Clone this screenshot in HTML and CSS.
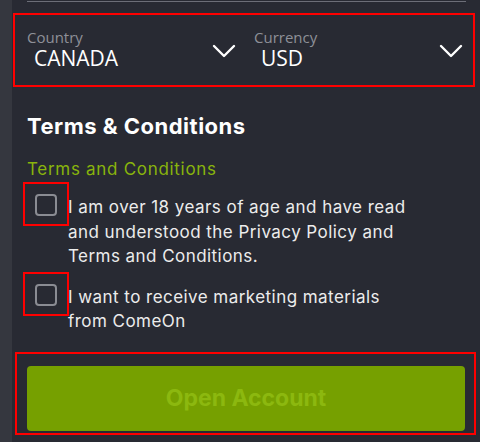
FILE: index.html
```html
<!DOCTYPE html>
<html lang="en">
<head>
<meta charset="utf-8">
<title>Open Account</title>
<link rel="stylesheet" href="styles.css">
</head>
<body>
<div class="page">
  <div class="rail"></div>
  <main class="form">
    <div class="prev-field"></div>

    <div class="selects highlight">
      <div class="field">
        <div class="field-text">
          <div class="field-label">Country</div>
          <div class="field-value">CANADA</div>
        </div>
        <svg class="chevron" width="24" height="15" viewBox="0 0 24 15" aria-hidden="true"><path d="M2 2 L12 12 L22 2" fill="none" stroke="#ffffff" stroke-width="2.4" stroke-linecap="round" stroke-linejoin="round"/></svg>
      </div>
      <div class="field">
        <div class="field-text">
          <div class="field-label">Currency</div>
          <div class="field-value">USD</div>
        </div>
        <svg class="chevron" width="24" height="15" viewBox="0 0 24 15" aria-hidden="true"><path d="M2 2 L12 12 L22 2" fill="none" stroke="#ffffff" stroke-width="2.4" stroke-linecap="round" stroke-linejoin="round"/></svg>
      </div>
    </div>

    <h2 class="section-title">Terms &amp; Conditions</h2>
    <div class="terms-link">Terms and Conditions</div>

    <label class="check-row first">
      <span class="check-hit"><span class="checkbox"></span></span>
      <span class="check-text">I am over 18 years of age and have read and understood the Privacy Policy and Terms and Conditions.</span>
    </label>
    <label class="check-row second">
      <span class="check-hit"><span class="checkbox"></span></span>
      <span class="check-text">I want to receive marketing materials from ComeOn</span>
    </label>

    <div class="submit-wrap">
      <button class="submit" type="button">Open Account</button>
    </div>
  </main>
</div>
</body>
</html>
```

FILE: styles.css
```css
html, body {
  margin: 0;
  padding: 0;
  background: #282a33;
  height: 442px;
  overflow: hidden;
}

.page {
  display: flex;
  width: 480px;
  height: 442px;
}

.rail {
  width: 12px;
  flex: none;
  background: #35373f;
}

.form {
  flex: 1;
  background: #282a33;
  padding: 0 14px 0 15px;
  font-family: Inter, "Noto Sans", sans-serif;
  color: #ececec;
}

.prev-field {
  height: 1px;
  border-bottom: 1px solid #6c6e78;
}

.highlight {
  border: 2px solid #ff0000;
}

.selects {
  margin: 11px -9px 0 -14px;
  padding: 13px 7px 15px 12px;
  display: grid;
  grid-template-columns: 1fr 1fr;
  column-gap: 15px;
  font-family: "Open Sans", sans-serif;
}

.field {
  display: flex;
  align-items: center;
}

.field-text {
  flex: 1;
}

.field-label {
  font-size: 15px;
  line-height: 18px;
  color: #8e9098;
}

.field-value {
  font-size: 21px;
  line-height: 24px;
  color: #ffffff;
  padding-left: 7px;
}

.chevron {
  flex: none;
  margin-right: 3px;
  margin-top: 5px;
}

.section-title {
  margin: 26px 0 0;
  font-size: 22px;
  line-height: 26px;
  font-weight: 700;
  letter-spacing: 0.5px;
  color: #ffffff;
}

.terms-link {
  margin-top: 18px;
  font-size: 17px;
  line-height: 24px;
  letter-spacing: 0.7px;
  color: #88b40c;
}

.check-row {
  display: flex;
  align-items: flex-start;
  font-size: 17px;
  line-height: 24.5px;
  letter-spacing: 0.45px;
  color: #ececec;
}

.check-row.first {
  margin-top: 13px;
}

.check-row.second {
  margin-top: 15px;
}

.check-hit {
  flex: none;
  display: block;
  margin: -12px 0 0 -4px;
  padding: 10px 10px 8px 10px;
  border: 2px solid #ff0000;
}

.checkbox {
  display: block;
  width: 22px;
  height: 22px;
  box-sizing: border-box;
  border: 2px solid #8a8c93;
  border-radius: 4px;
}

.check-text {
  margin-left: -1px;
  padding-top: 1px;
  width: 352px;
}

.submit-wrap {
  margin: 18px -10px 0 -12px;
  padding: 12px 9px 2px 10px;
  border: 2px solid #ff0000;
}

.submit {
  display: block;
  width: 100%;
  height: 65px;
  border: none;
  border-radius: 4px;
  background: #76a000;
  color: #8cb80f;
  font-family: Inter, "Noto Sans", sans-serif;
  font-size: 23px;
  font-weight: 700;
  cursor: default;
}
```
